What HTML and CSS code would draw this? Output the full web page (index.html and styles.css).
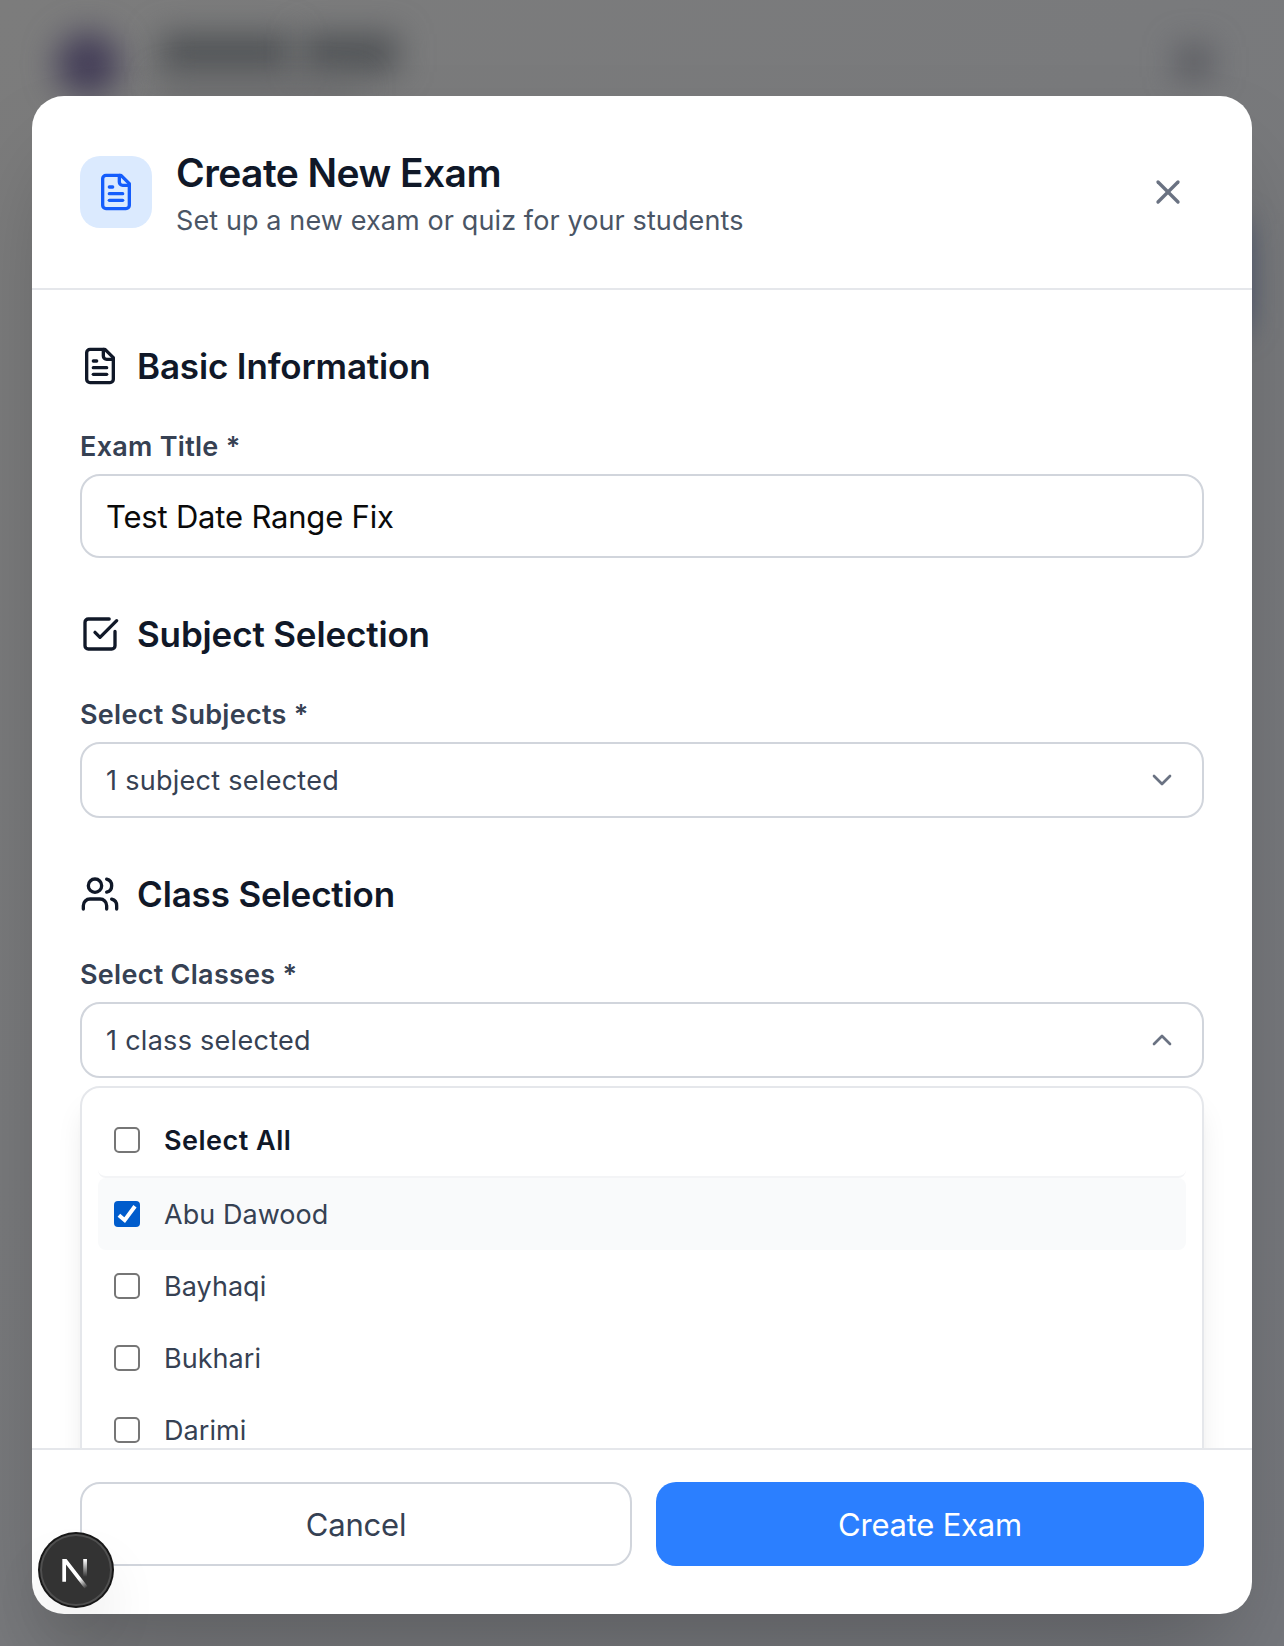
FILE: index.html
```html
<!DOCTYPE html>
<html lang="en">
<head>
<meta charset="utf-8">
<title>Create New Exam</title>
<link rel="stylesheet" href="styles.css">
</head>
<body>
<div class="backdrop" aria-hidden="true">
  <span class="blot blot-logo"></span>
  <span class="blot blot-title"></span>
  <span class="blot blot-title-end"></span>
  <span class="blot blot-subtitle"></span>
  <span class="blot blot-menu"></span>
  <span class="blot blot-panel"></span>
</div>
<main class="overlay">
  <section class="modal" role="dialog" aria-labelledby="title">
    <header class="modal-header">
      <div class="badge">
        <svg class="icon" viewBox="0 0 24 24"><path d="M15 2H6a2 2 0 0 0-2 2v16a2 2 0 0 0 2 2h12a2 2 0 0 0 2-2V7Z"/><path d="M14 2v4a2 2 0 0 0 2 2h4"/><path d="M10 9H8"/><path d="M16 13H8"/><path d="M16 17H8"/></svg>
      </div>
      <div class="heading">
        <h1 class="title" id="title">Create New Exam</h1>
        <p class="subtitle">Set up a new exam or quiz for your students</p>
      </div>
      <button class="close" aria-label="Close">
        <svg class="icon" viewBox="0 0 24 24"><path d="M18 6 6 18"/><path d="m6 6 12 12"/></svg>
      </button>
    </header>

    <div class="modal-body">
      <section class="group">
        <h2 class="group-title">
          <svg class="icon" viewBox="0 0 24 24"><path d="M15 2H6a2 2 0 0 0-2 2v16a2 2 0 0 0 2 2h12a2 2 0 0 0 2-2V7Z"/><path d="M14 2v4a2 2 0 0 0 2 2h4"/><path d="M10 9H8"/><path d="M16 13H8"/><path d="M16 17H8"/></svg>
          <span>Basic Information</span>
        </h2>
        <div class="field">
          <label class="label">Exam Title *</label>
          <div class="control input"><span>Test Date Range Fix</span></div>
        </div>
      </section>

      <section class="group">
        <h2 class="group-title">
          <svg class="icon" viewBox="0 0 24 24"><path d="M21 10.5V19a2 2 0 0 1-2 2H5a2 2 0 0 1-2-2V5a2 2 0 0 1 2-2h12.5"/><path d="m9 11 3 3L22 4"/></svg>
          <span>Subject Selection</span>
        </h2>
        <div class="field">
          <label class="label">Select Subjects *</label>
          <div class="control select"><span>1 subject selected</span>
            <svg class="icon chevron" viewBox="0 0 24 24"><path d="m6 9 6 6 6-6"/></svg>
          </div>
        </div>
      </section>

      <section class="group">
        <h2 class="group-title">
          <svg class="icon" viewBox="0 0 24 24"><path d="M16 21v-2a4 4 0 0 0-4-4H6a4 4 0 0 0-4 4v2"/><circle cx="9" cy="7" r="4"/><path d="M22 21v-2a4 4 0 0 0-3-3.87"/><path d="M16 3.13a4 4 0 0 1 0 7.75"/></svg>
          <span>Class Selection</span>
        </h2>
        <div class="field">
          <label class="label">Select Classes *</label>
          <div class="control select"><span>1 class selected</span>
            <svg class="icon chevron" viewBox="0 0 24 24"><path d="m18 15-6-6-6 6"/></svg>
          </div>
          <div class="options">
            <div class="option option-all"><i class="check"></i><span>Select All</span></div>
            <div class="option option-active"><i class="check check-on"><svg viewBox="0 0 26 26"><path d="M4.9 14.2 10.7 19.2 21 5.3"/></svg></i><span>Abu Dawood</span></div>
            <div class="option"><i class="check"></i><span>Bayhaqi</span></div>
            <div class="option"><i class="check"></i><span>Bukhari</span></div>
            <div class="option"><i class="check"></i><span>Darimi</span></div>
          </div>
        </div>
      </section>
    </div>

    <footer class="modal-footer">
      <button class="btn btn-cancel">Cancel</button>
      <button class="btn btn-create">Create Exam</button>
    </footer>
  </section>
</main>
<div class="devtools">
  <svg viewBox="2 2 36 36" fill="none">
    <defs>
      <linearGradient id="diag" x1="9.956" y1="11.123" x2="14.6" y2="17" gradientUnits="userSpaceOnUse"><stop stop-color="#fff"/><stop offset=".75" stop-color="#fff" stop-opacity="0"/></linearGradient>
      <linearGradient id="stem" x1="12.8" y1="1.4" x2="12.78" y2="9.9" gradientUnits="userSpaceOnUse"><stop stop-color="#fff"/><stop offset="1" stop-color="#fff" stop-opacity="0"/></linearGradient>
      <clipPath id="clip"><path d="M0 1H18V17H0Z"/></clipPath>
    </defs>
    <g transform="translate(11.75 13.5)">
      <path d="M13.3 15.2 2.34 1V12.4" stroke="url(#diag)" stroke-width="1.86" clip-path="url(#clip)"/>
      <path d="M12.8 1V12.4" stroke="url(#stem)" stroke-width="1.86"/>
    </g>
  </svg>
</div>
</body>
</html>
```

FILE: styles.css
```css
* { box-sizing: border-box; margin: 0; padding: 0; }

body {
  width: 1284px;
  height: 1646px;
  overflow: hidden;
  font-family: Inter, "Liberation Sans", sans-serif;
  font-size: 27px;
  line-height: 40px;
  color: #364153;
}

.backdrop {
  position: absolute;
  inset: 0;
  overflow: hidden;
  background: linear-gradient(135deg, #7c7c7c 0%, #797a7c 40%, #75777c 100%);
}

.blot { position: absolute; filter: blur(16px); }
.blot-logo { left: 56px; top: 32px; width: 64px; height: 64px; border-radius: 50%; background: #443e58; }
.blot-title { left: 160px; top: 34px; width: 132px; height: 38px; background: #4f5255; }
.blot-title-end { left: 302px; top: 34px; width: 96px; height: 38px; background: #4f5255; }
.blot-subtitle { left: 160px; top: 80px; width: 200px; height: 16px; background: #666769; }
.blot-menu { left: 1178px; top: 46px; width: 32px; height: 32px; background: #56575d; }
.blot-panel { left: 1100px; top: 224px; width: 144px; height: 104px; background: #38486c; }

.overlay {
  position: relative;
  height: 1646px;
  padding: 96px 32px 32px;
}

.modal {
  display: flex;
  flex-direction: column;
  height: 1518px;
  border-radius: 32px;
  overflow: hidden;
  background: #fff;
  box-shadow: 0 50px 100px -24px rgba(0, 0, 0, .25);
}

.icon {
  flex: none;
  width: 40px;
  height: 40px;
  fill: none;
  stroke: currentColor;
  stroke-width: 2;
  stroke-linecap: round;
  stroke-linejoin: round;
}

.modal-header {
  flex: none;
  display: flex;
  align-items: center;
  gap: 24px;
  padding: 48px;
  border-bottom: 2px solid #e5e7eb;
}

.badge {
  display: grid;
  place-items: center;
  width: 72px;
  height: 72px;
  border-radius: 20px;
  background: #dbeafe;
  color: #155dfc;
}

.heading { flex: 1; }

.title {
  padding-top: 2px;
  font-size: 39px;
  line-height: 54px;
  font-weight: 600;
  letter-spacing: -.56px;
  color: #101828;
}

.subtitle {
  padding-top: 2px;
  line-height: 38px;
  letter-spacing: .11px;
  color: #4a5565;
}

.close {
  display: grid;
  place-items: center;
  width: 72px;
  height: 72px;
  border: 0;
  background: none;
  color: #6a7282;
}

.modal-body {
  flex: 1;
  display: flex;
  flex-direction: column;
  gap: 48px;
  min-height: 0;
  padding: 48px;
  overflow: hidden;
}

.group { display: flex; flex-direction: column; gap: 32px; }

.group-title {
  display: flex;
  align-items: center;
  gap: 17px;
  font-size: 35px;
  line-height: 56px;
  font-weight: 600;
  letter-spacing: -.15px;
  color: #101828;
}

.field { display: flex; flex-direction: column; gap: 8px; }

.label {
  padding-top: 2px;
  line-height: 38px;
  font-weight: 600;
  letter-spacing: .28px;
}

.control {
  display: flex;
  align-items: center;
  justify-content: space-between;
  padding: 16px 24px;
  border: 2px solid #d1d5dc;
  border-radius: 20px;
}
.control span, .option span { padding-top: 2px; line-height: 38px; }

.input { font-size: 31px; letter-spacing: -.19px; color: #0a0a0a; }
.input span { line-height: 46px; }
.select { letter-spacing: .28px; }
.chevron { width: 32px; height: 32px; color: #6a7282; }

.options {
  height: 500px;
  padding: 16px;
  border: 2px solid #e5e7eb;
  border-radius: 20px;
  background: #fff;
  box-shadow: 0 20px 30px -6px rgba(0, 0, 0, .1), 0 8px 12px -8px rgba(0, 0, 0, .1);
}

.option {
  display: flex;
  align-items: center;
  gap: 24px;
  padding: 16px;
  border-radius: 8px;
  letter-spacing: .05px;
}
.option-all { border-bottom: 2px solid #f3f4f6; font-weight: 600; letter-spacing: .5px; color: #101828; }
.option-active { background: #f9fafb; }

.check {
  width: 26px;
  height: 26px;
  border: 2px solid #767676;
  border-radius: 5px;
  background: #fff;
}
.check-on { border: 0; border-radius: 4px; background: #005ccc; }
.check-on svg { display: block; fill: none; stroke: #fff; stroke-width: 4; }

.modal-footer {
  flex: none;
  display: flex;
  gap: 24px;
  padding: 32px 48px 48px;
  border-top: 2px solid #e5e7eb;
}

.btn {
  flex: 1;
  padding: 18px 32px 16px;
  border: 0;
  border-radius: 20px;
  font: 400 31px/46px Inter, "Liberation Sans", sans-serif;
  letter-spacing: -.22px;
}
.btn-cancel { border: 2px solid #d1d5dc; background: #fff; color: #364153; }
.btn-create { background: #2b7fff; color: #fff; }

.devtools {
  position: absolute;
  left: 40px;
  top: 1534px;
  width: 72px;
  height: 72px;
  border-radius: 50%;
  background: #333;
  box-shadow: 0 0 0 2px #171717, inset 0 0 0 2px rgba(255, 255, 255, .14), 0 32px 64px -16px rgba(0, 0, 0, .24);
}
.devtools svg { display: block; width: 72px; height: 72px; }
```
